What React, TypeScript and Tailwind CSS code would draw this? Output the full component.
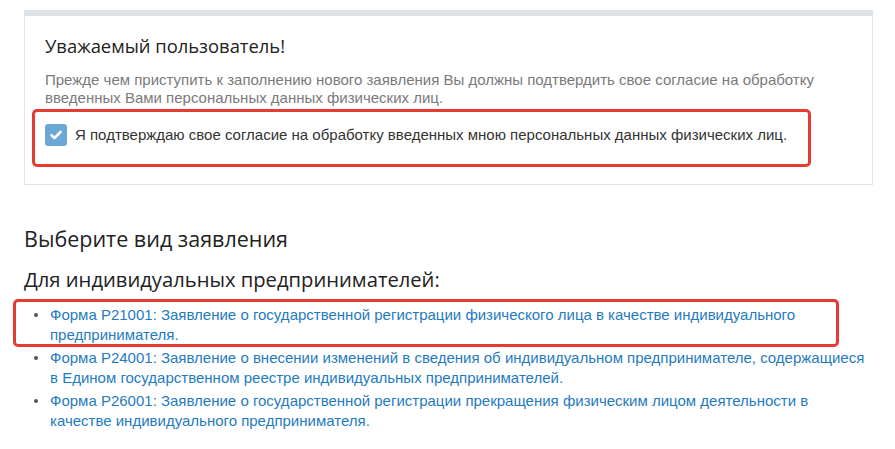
import React from 'react';

const forms = [
  {
    code: 'Р21001',
    text: 'Заявление о государственной регистрации физического лица в качестве индивидуального предпринимателя.',
    marked: true,
  },
  {
    code: 'Р24001',
    text: 'Заявление о внесении изменений в сведения об индивидуальном предпринимателе, содержащиеся в Едином государственном реестре индивидуальных предпринимателей.',
    marked: false,
  },
  {
    code: 'Р26001',
    text: 'Заявление о государственной регистрации прекращения физическим лицом деятельности в качестве индивидуального предпринимателя.',
    marked: false,
  },
];

const CheckBox = () => (
  <span className="flex h-[22px] w-[22px] shrink-0 items-center justify-center rounded-[3px] bg-[#6aa9d6]">
    <svg width="14" height="14" viewBox="0 0 14 14" fill="none">
      <path d="M2.5 7.2 L5.6 10 L11.5 4" stroke="white" strokeWidth="2.6" strokeLinecap="round" strokeLinejoin="round" />
    </svg>
  </span>
);

export default function App() {
  return (
    <div className="min-h-[449px] w-[895px] bg-white pt-[10px] font-['Liberation_Sans',Arial,sans-serif]">
      <div className="ml-[24px] w-[849px] border border-t-[6px] border-[#dde3e6] bg-white px-5 pb-[38px] pt-[19px]">
        <h2 className="font-['Open_Sans',sans-serif] text-[18.4px] leading-[22px] text-[#222]">Уважаемый пользователь!</h2>
        <p className="mt-[14px] text-[15px] leading-[18px] text-[#7a7a7a]">
          Прежде чем приступить к заполнению нового заявления Вы должны подтвердить свое согласие на обработку
          введенных Вами персональных данных физических лиц.
        </p>
        <div className="relative mt-[17px]">
          <label className="flex items-center gap-2 text-[15px] leading-[22px] text-[#333]">
            <CheckBox />
            <span>Я подтверждаю свое согласие на обработку введенных мною персональных данных физических лиц.</span>
          </label>
          <div className="pointer-events-none absolute left-[-13px] top-[-15px] h-[58px] w-[779px] rounded-[5px] border-[3px] border-[#e53b30]" />
        </div>
      </div>

      <div className="px-6">
        <h2 className="mt-[42px] font-['Open_Sans',sans-serif] text-[21.5px] leading-[23px] text-[#222]">Выберите вид заявления</h2>
        <h3 className="mt-[18px] font-['Open_Sans',sans-serif] text-[20.2px] leading-[23px] text-[#222]">Для индивидуальных предпринимателей:</h3>
        <ul className="mt-[14px] flex flex-col gap-[3px]">
          {forms.map((f) => (
            <li key={f.code} className="relative flex text-[15px] leading-[20px]">
              <span className="mt-[8px] ml-[10px] mr-[12px] h-[4px] w-[4px] shrink-0 rounded-full bg-[#555]" />
              <a href="#" className="text-[#1f7bc1]">
                {`Форма ${f.code}: ${f.text}`}
              </a>
              {f.marked && (
                <div className="pointer-events-none absolute left-[-11px] top-[-6px] h-[48px] w-[826px] rounded-[5px] border-[3px] border-[#e53b30]" />
              )}
            </li>
          ))}
        </ul>
      </div>
    </div>
  );
}
